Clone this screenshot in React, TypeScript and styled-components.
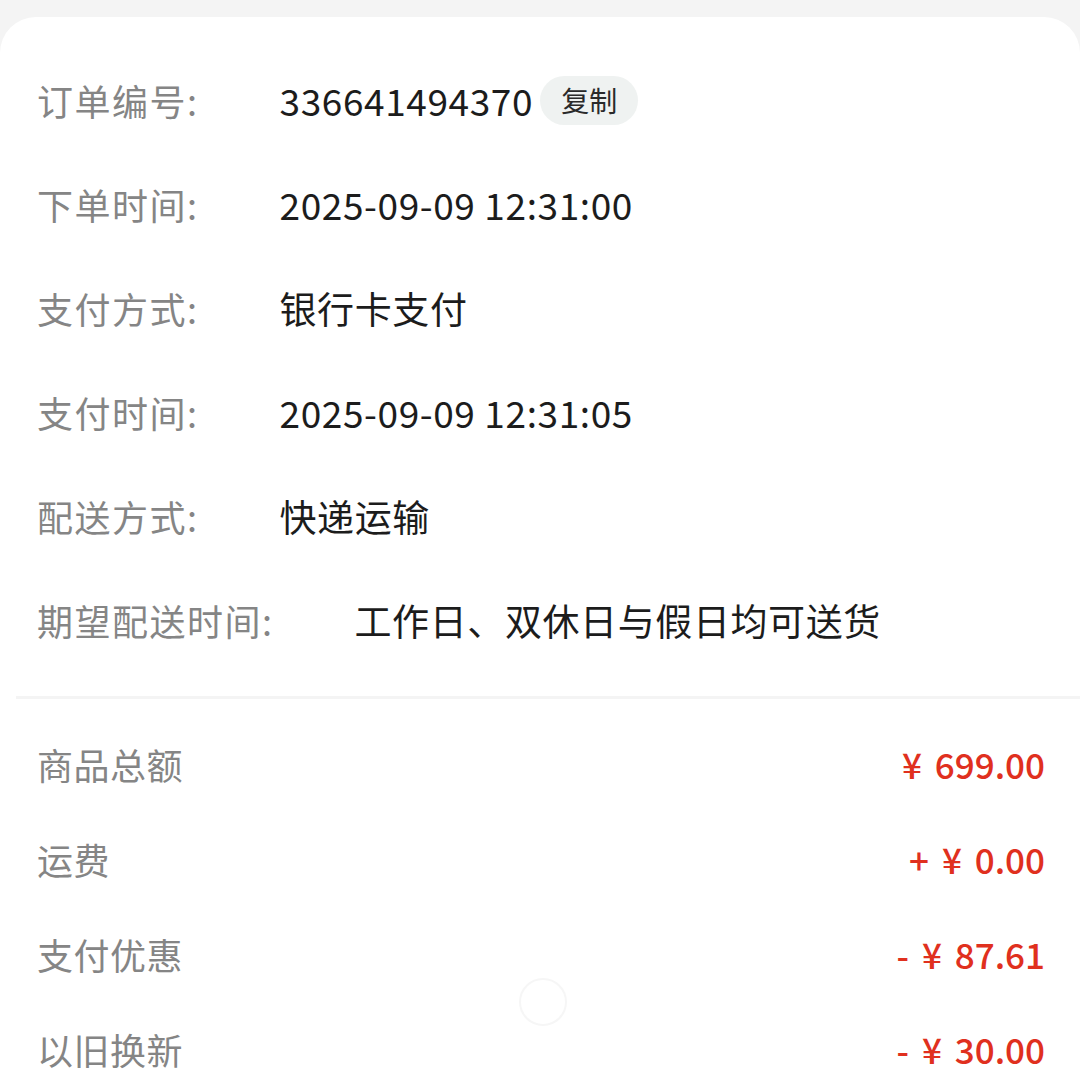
import styled, { createGlobalStyle } from "styled-components"

const GlobalStyle = createGlobalStyle`
  html, body {
    margin: 0;
    padding: 0;
    background: #f4f4f4;
  }
  body {
    font-family: "Noto Sans CJK SC", "Noto Sans", sans-serif;
    -webkit-font-smoothing: antialiased;
  }
`

const Page = styled.div`
  width: 1080px;
  height: 1080px;
  overflow: hidden;
  padding-top: 17px;
  box-sizing: border-box;
`

const Card = styled.div`
  position: relative;
  background: #ffffff;
  border-radius: 36px 36px 0 0;
  padding-top: 31px;
  min-height: 1063px;
  box-sizing: border-box;
`

const InfoList = styled.div`
  display: flex;
  flex-direction: column;
  padding: 0 37px;
`

const InfoRow = styled.div`
  display: flex;
  align-items: center;
  height: 104px;
`

const InfoLabel = styled.span`
  font-size: 36px;
  color: #858585;
  margin-right: 81px;
  white-space: nowrap;
  letter-spacing: 1.5px;
`

const InfoValue = styled.span`
  font-size: 37px;
  color: #1c1c1c;
  white-space: nowrap;
  letter-spacing: 0.6px;
`

const CopyBadge = styled.span`
  display: inline-flex;
  align-items: center;
  justify-content: center;
  margin-left: 7px;
  height: 49px;
  padding: 0 21px;
  border-radius: 25px;
  background: #eff2f1;
  color: #2a2a2a;
  font-size: 28px;
`

const Divider = styled.div`
  height: 3px;
  margin: 24px 0 17px 16px;
  background: #f4f4f4;
`

const AmountList = styled.div`
  display: flex;
  flex-direction: column;
  padding: 0 35px 0 37px;
`

const AmountRow = styled.div`
  display: flex;
  align-items: center;
  justify-content: space-between;
  height: 95px;
`

const AmountLabel = styled.span`
  font-size: 36px;
  color: #858585;
  letter-spacing: 0.5px;
`

const AmountValue = styled.span`
  font-size: 35px;
  font-weight: 500;
  color: #e0301e;
  white-space: nowrap;
  word-spacing: 5px;
`

const TouchRing = styled.div`
  position: absolute;
  left: 519px;
  top: 961px;
  width: 44px;
  height: 44px;
  border-radius: 50%;
  border: 2px solid #f6f6f6;
`

const info = [
  { label: "订单编号:", value: "336641494370", copy: true },
  { label: "下单时间:", value: "2025-09-09 12:31:00" },
  { label: "支付方式:", value: "银行卡支付" },
  { label: "支付时间:", value: "2025-09-09 12:31:05" },
  { label: "配送方式:", value: "快递运输" },
  { label: "期望配送时间:", value: "工作日、双休日与假日均可送货" },
]

const amounts = [
  { label: "商品总额", value: "¥ 699.00" },
  { label: "运费", value: "+ ¥ 0.00" },
  { label: "支付优惠", value: "- ¥ 87.61" },
  { label: "以旧换新", value: "- ¥ 30.00" },
]

export default function App() {
  return (
    <>
      <GlobalStyle />
      <Page>
        <Card>
          <InfoList>
            {info.map((row) => (
              <InfoRow key={row.label}>
                <InfoLabel>{row.label}</InfoLabel>
                <InfoValue>{row.value}</InfoValue>
                {row.copy && <CopyBadge>复制</CopyBadge>}
              </InfoRow>
            ))}
          </InfoList>
          <Divider />
          <AmountList>
            {amounts.map((row) => (
              <AmountRow key={row.label}>
                <AmountLabel>{row.label}</AmountLabel>
                <AmountValue>{row.value}</AmountValue>
              </AmountRow>
            ))}
          </AmountList>
          <TouchRing />
        </Card>
      </Page>
    </>
  )
}
